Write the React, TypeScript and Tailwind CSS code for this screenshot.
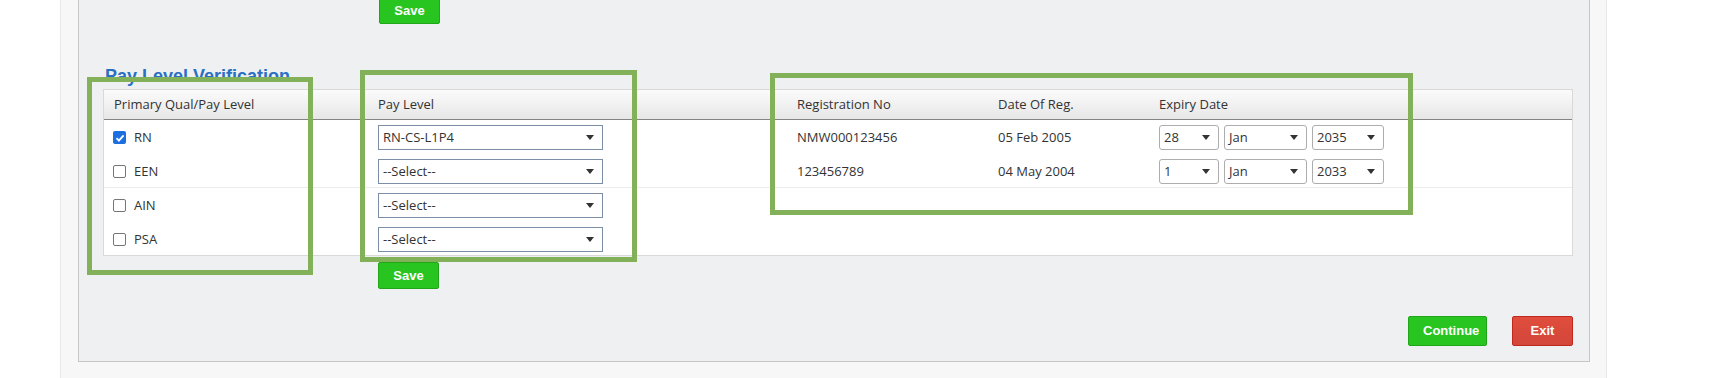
import React from "react";

type Item = { label: string; checked?: boolean; payLevel: string };
type Reg = { no: string; date: string; day: string; month: string; year: string };

const rows: { items: Item[]; regs: Reg[] }[] = [
  {
    items: [
      { label: "RN", checked: true, payLevel: "RN-CS-L1P4" },
      { label: "EEN", payLevel: "--Select--" },
    ],
    regs: [
      { no: "NMW000123456", date: "05 Feb 2005", day: "28", month: "Jan", year: "2035" },
      { no: "123456789", date: "04 May 2004", day: "1", month: "Jan", year: "2033" },
    ],
  },
  {
    items: [
      { label: "AIN", payLevel: "--Select--" },
      { label: "PSA", payLevel: "--Select--" },
    ],
    regs: [],
  },
];

function Caret() {
  return (
    <svg width="8" height="5" viewBox="0 0 8 5" className="shrink-0">
      <path d="M0 0h8L4 5z" fill="#333" />
    </svg>
  );
}

function PaySelect({ value }: { value: string }) {
  return (
    <div className="w-[225px] h-[25px] bg-white border border-[#7c8ea6] flex items-center justify-between pl-[4px] pr-[8px]">
      <span>{value}</span>
      <Caret />
    </div>
  );
}

function DateSelect({ value, width }: { value: string; width: string }) {
  return (
    <div
      className={`${width} h-[25px] bg-white border border-[#adadad] rounded-[3px] flex items-center justify-between pl-[4px] pr-[8px]`}
    >
      <span>{value}</span>
      <Caret />
    </div>
  );
}

function Checkbox({ checked }: { checked?: boolean }) {
  return checked ? (
    <div className="w-[13px] h-[13px] rounded-[2px] bg-[#1b6fe0] flex items-center justify-center">
      <svg width="10" height="10" viewBox="0 0 10 10">
        <path d="M1.5 5.2l2.4 2.4L8.6 2.4" stroke="#fff" strokeWidth="1.8" fill="none" />
      </svg>
    </div>
  ) : (
    <div className="w-[13px] h-[13px] rounded-[2px] bg-white border border-[#767676]" />
  );
}

function GreenButton({ children, className = "" }: { children: React.ReactNode; className?: string }) {
  return (
    <button
      className={`h-[27px] px-[14px] bg-[#28c41f] border border-[#1fa619] rounded-[2px] text-white font-bold text-[13px] font-['Liberation_Sans',Arial,sans-serif] ${className}`}
    >
      {children}
    </button>
  );
}

export default function App() {
  return (
    <div className="relative w-[1713px] h-[378px] bg-white flex overflow-hidden font-['Open_Sans',sans-serif] text-[13px] text-[#333]">
      <div className="ml-[60px] w-[1547px] h-full bg-[#f7f7f7] border-x border-[#e8e8e8] pl-[17px] pr-[16px]">
        <div className="h-[362px] bg-[#eff0f2] border-x border-b border-[#c6c6c6] flex flex-col">
          <GreenButton className="-mt-[3px] ml-[300px] self-start w-[61px] px-0">Save</GreenButton>

          <h2 className="mt-[40px] ml-[26px] h-[24px] leading-[24px] text-[18px] font-bold text-[#2a6fc4] font-['Liberation_Sans',Arial,sans-serif]">
            Pay Level Verification
          </h2>

          <div className="mt-[1px] ml-[24px] mr-[16px] border border-[#d9d9d9] bg-white">
            <div className="grid grid-cols-[264px_419px_201px_161px_1fr] h-[30px] bg-gradient-to-b from-[#fbfbfb] to-[#e7e7e7] border-b border-[#858585] items-center">
              <div className="pl-[10px]">Primary Qual/Pay Level</div>
              <div className="pl-[10px]">Pay Level</div>
              <div className="pl-[10px]">Registration No</div>
              <div className="pl-[10px]">Date Of Reg.</div>
              <div className="pl-[10px]">Expiry Date</div>
            </div>
            {rows.map((row, ri) => (
              <div
                key={ri}
                className={`grid grid-cols-[264px_419px_201px_161px_1fr] ${ri === 0 ? "h-[68px] border-b border-[#ececec]" : "h-[67px]"}`}
              >
                <div className="pl-[9px] pt-[5px] flex flex-col gap-[9px]">
                  {row.items.map((it) => (
                    <div key={it.label} className="h-[25px] flex items-center gap-[8px]">
                      <Checkbox checked={it.checked} />
                      <span>{it.label}</span>
                    </div>
                  ))}
                </div>
                <div className="pl-[10px] pt-[5px] flex flex-col gap-[9px]">
                  {row.items.map((it) => (
                    <PaySelect key={it.label} value={it.payLevel} />
                  ))}
                </div>
                <div className="pl-[10px] pt-[5px] flex flex-col gap-[9px]">
                  {row.regs.map((r) => (
                    <div key={r.no} className="h-[25px] flex items-center">
                      {r.no}
                    </div>
                  ))}
                </div>
                <div className="pl-[10px] pt-[5px] flex flex-col gap-[9px]">
                  {row.regs.map((r) => (
                    <div key={r.no} className="h-[25px] flex items-center">
                      {r.date}
                    </div>
                  ))}
                </div>
                <div className="pl-[10px] pt-[5px] flex flex-col gap-[9px]">
                  {row.regs.map((r) => (
                    <div key={r.no} className="h-[25px] flex gap-[5px]">
                      <DateSelect value={r.day} width="w-[60px]" />
                      <DateSelect value={r.month} width="w-[83px]" />
                      <DateSelect value={r.year} width="w-[72px]" />
                    </div>
                  ))}
                </div>
              </div>
            ))}
          </div>

          <GreenButton className="mt-[6px] ml-[299px] self-start w-[61px] px-0">Save</GreenButton>

          <div className="mt-[27px] mr-[16px] flex justify-end gap-[25px]">
            <GreenButton className="h-[30px] w-[79px] px-0">Continue</GreenButton>
            <button className="h-[30px] w-[61px] bg-gradient-to-b from-[#e04d3c] to-[#d2463a] border border-[#c0281f] rounded-[2px] text-white font-bold text-[13px] font-['Liberation_Sans',Arial,sans-serif]">
              Exit
            </button>
          </div>
        </div>
      </div>

      {/* annotation boxes */}
      <div className="absolute left-[87px] top-[77px] w-[226px] h-[198px] border-[5px] border-[#83b15a]" />
      <div className="absolute left-[360px] top-[70px] w-[277px] h-[192px] border-[5px] border-[#83b15a]" />
      <div className="absolute left-[770px] top-[73px] w-[643px] h-[142px] border-[5px] border-[#83b15a]" />
    </div>
  );
}
